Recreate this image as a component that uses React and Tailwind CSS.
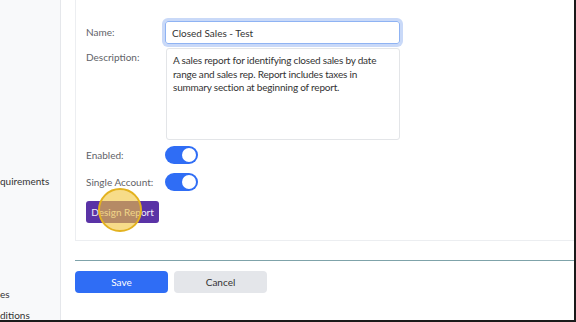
export default function App() {
    return (
        <div className="w-[576px] h-[322px] overflow-hidden bg-white border-r-2 border-b-2 border-[#1a1a1a] flex text-[10px] text-[#333]" style={{ fontFamily: 'Lato, "Open Sans", sans-serif' }}>
            {/* Sidebar (clipped) */}
            <div className="w-[61px] shrink-0 bg-[#f8f9fa] border-r border-[#e5e7eb] overflow-hidden">
                <div className="h-[174px]" />
                <div className="whitespace-nowrap leading-[14px]">quirements</div>
                <div className="h-[99px]" />
                <div className="whitespace-nowrap leading-[14px]">es</div>
                <div className="h-[7px]" />
                <div className="whitespace-nowrap leading-[14px]">ditions</div>
            </div>

            {/* Main */}
            <div className="flex-1 pl-[14px]">
                {/* Report card */}
                <div className="border-l border-b border-[#eceef1] pl-[10px] pt-[21px] pb-[17px]">
                    <div className="flex items-center">
                        <span className="w-[79px] text-[#5f6368]">Name:</span>
                        <input
                            defaultValue="Closed Sales - Test"
                            className="w-[235px] h-[23px] px-[6px] rounded-[3px] border border-[#8fb3f3] ring-[3px] ring-[#c9d9f8] outline-none text-[#333]"
                        />
                    </div>
                    <div className="flex mt-[4px]">
                        <span className="w-[80px] pt-[2px] text-[#5f6368]">Description:</span>
                        <textarea
                            defaultValue="A sales report for identifying closed sales by date range and sales rep. Report includes taxes in summary section at beginning of report."
                            className="w-[234px] h-[92px] pl-[6px] pr-[8px] py-[5px] rounded-[3px] border border-[#e3e5e8] resize-none outline-none leading-[13.5px] tracking-[-0.2px] text-[#333]"
                        />
                    </div>
                    <div className="flex items-center mt-[6px]">
                        <span className="w-[79px] text-[#5f6368]">Enabled:</span>
                        <Toggle />
                    </div>
                    <div className="flex items-center mt-[9px]">
                        <span className="w-[79px] text-[#5f6368]">Single Account:</span>
                        <Toggle />
                    </div>
                    <div className="relative mt-[10px] w-[73px]">
                        <button className="w-[73px] h-[22px] rounded-[3px] bg-[#5a33a6] text-[#f1ecf8]">
                            Design Report
                        </button>
                        {/* click highlight */}
                        <div className="absolute left-[12px] top-[-13px] w-[44px] h-[44px] rounded-full bg-[#f2c53a]/60 border-2 border-[#e3b21f]" />
                    </div>
                </div>

                <div className="mt-[19px] h-px bg-[#7fa3aa]" />

                <div className="flex gap-[6px] mt-[10px]">
                    <button className="w-[93px] h-[22px] rounded-[4px] bg-[#2f6df5] text-white">Save</button>
                    <button className="w-[93px] h-[22px] rounded-[4px] bg-[#e4e6ea] text-[#333]">Cancel</button>
                </div>
            </div>
        </div>
    );
}

function Toggle() {
    return (
        <div className="w-[33px] h-[18px] rounded-full bg-[#2f6df5] flex items-center justify-end pr-[2px]">
            <div className="w-[14px] h-[14px] rounded-full bg-white" />
        </div>
    );
}
